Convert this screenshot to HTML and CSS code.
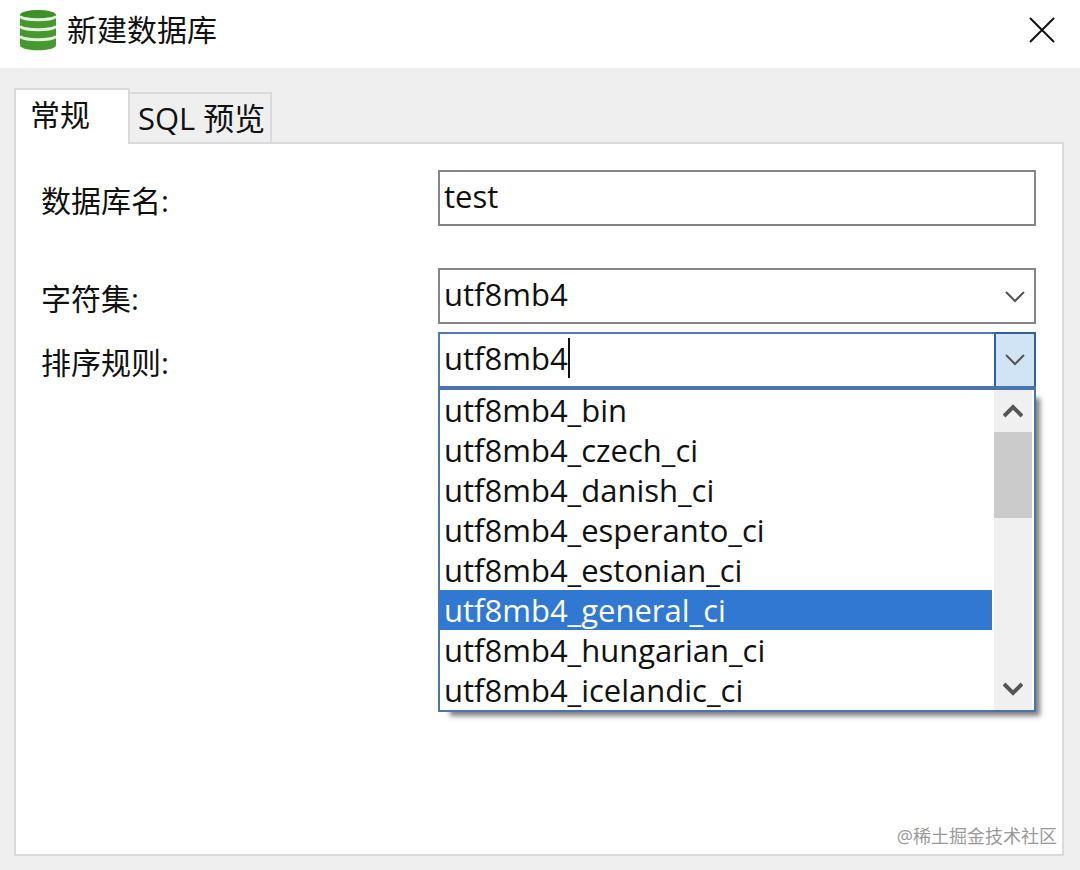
FILE: index.html
```html
<!DOCTYPE html>
<html lang="zh-CN">
<head>
    <meta charset="UTF-8">
    <meta name="viewport" content="width=device-width, initial-scale=1.0">
    <title>新建数据库</title>
    <link rel="stylesheet" href="styles.css">
</head>
<body>
    <div class="window">

        <!-- 标题栏 -->
        <header class="titlebar">
            <svg class="logo" viewBox="0 0 36 42" aria-hidden="true">
                <path d="M0 5v31c0 7 36 7 36 0V5z" fill="#46982f"/>
                <path d="M0 0h36v6H0z" fill="#fff"/>
                <ellipse cx="18" cy="6" rx="18" ry="5" fill="#3d9026"/>
                <path d="M0 7c2 5 34 5 36 0" class="logo-line"/>
                <path d="M0 17c2 5 34 5 36 0" class="logo-line"/>
                <path d="M0 27c2 5 34 5 36 0" class="logo-line"/>
            </svg>
            <h1>新建数据库</h1>
            <button type="button" class="close" aria-label="关闭">
                <svg viewBox="0 0 26 26"><path d="M1 1l24 24M25 1L1 25"/></svg>
            </button>
        </header>

        <main class="content">
            <!-- 选项卡 -->
            <div class="tabs" role="tablist">
                <button type="button" class="tab active" role="tab" aria-selected="true">常规</button>
                <button type="button" class="tab" role="tab" aria-selected="false">SQL 预览</button>
            </div>

            <form class="panel">
                <div class="row row-name">
                    <label for="name">数据库名:</label>
                    <input type="text" id="name" class="field" value="test">
                </div>

                <div class="row">
                    <label for="charset">字符集:</label>
                    <div class="select-wrap">
                        <select id="charset" class="field">
                            <option>utf8mb4</option>
                        </select>
                        <svg class="arrow" viewBox="0 0 20 12"><path d="M1 1l9 9 9-9"/></svg>
                    </div>
                </div>

                <div class="row">
                    <label for="collation">排序规则:</label>
                    <div class="combo">
                        <input type="text" id="collation" class="field" value="utf8mb4" role="combobox" aria-expanded="true" aria-controls="collations">
                        <span class="caret"></span>
                        <button type="button" class="combo-button" aria-label="展开">
                            <svg class="arrow" viewBox="0 0 20 12"><path d="M1 1l9 9 9-9"/></svg>
                        </button>

                        <!-- 下拉列表 -->
                        <div class="dropdown">
                            <ul id="collations" role="listbox">
                                <li role="option">utf8mb4_bin</li>
                                <li role="option">utf8mb4_czech_ci</li>
                                <li role="option">utf8mb4_danish_ci</li>
                                <li role="option">utf8mb4_esperanto_ci</li>
                                <li role="option">utf8mb4_estonian_ci</li>
                                <li role="option" class="selected" aria-selected="true">utf8mb4_general_ci</li>
                                <li role="option">utf8mb4_hungarian_ci</li>
                                <li role="option">utf8mb4_icelandic_ci</li>
                            </ul>
                            <div class="scrollbar">
                                <button type="button" aria-label="向上">
                                    <svg viewBox="0 0 20 16"><path d="M1 13l9-9 9 9"/></svg>
                                </button>
                                <div class="thumb"></div>
                                <button type="button" aria-label="向下">
                                    <svg viewBox="0 0 20 16"><path d="M1 3l9 9 9-9"/></svg>
                                </button>
                            </div>
                        </div>
                    </div>
                </div>

                <span class="watermark">@稀土掘金技术社区</span>
            </form>
        </main>
    </div>
</body>
</html>
```
FILE: styles.css
```css
* {
    box-sizing: border-box;
}

body {
    margin: 0;
    background: #efefef;
    color: #111;
    font-family: "Open Sans", "Noto Sans CJK SC", sans-serif;
    font-size: 30px;
}

button, input, select {
    font: inherit;
    color: inherit;
}

svg {
    display: block;
    fill: none;
}

.window {
    display: flex;
    flex-direction: column;
    min-height: 100vh;
}

/* 标题栏 */
.titlebar {
    display: flex;
    align-items: center;
    height: 68px;
    padding: 0 25px 8px 20px;
    background: #fff;
}

.logo {
    width: 36px;
    height: 42px;
}

.logo-line {
    stroke: #e4f3df;
    stroke-width: 3;
}

h1 {
    flex: 1;
    margin: 0 0 0 11px;
    font-size: 30px;
    font-weight: 400;
    line-height: 42px;
}

.close {
    padding: 0;
    border: none;
    background: none;
}

.close svg {
    width: 26px;
    height: 26px;
    stroke: #111;
    stroke-width: 2;
}

.content {
    display: flex;
    flex: 1;
    flex-direction: column;
    padding: 20px 16px 14px 14px;
}

/* 选项卡 */
.tabs {
    display: flex;
    align-items: flex-end;
    height: 56px;
    margin-bottom: -2px;
    z-index: 1;
}

.tab {
    height: 52px;
    padding: 0 5px 0 8px;
    border: 2px solid #dadada;
    border-left: none;
    background: #efefef;
    font-size: 31px;
    line-height: 48px;
}

.tab.active {
    height: 56px;
    padding: 0 38px 4px 14px;
    border-left: 2px solid #dadada;
    border-bottom: none;
    background: #fff;
    font-size: 30px;
}

.panel {
    position: relative;
    flex: 1;
    padding: 26px 26px 20px 24px;
    border: 2px solid #dadada;
    background: #fff;
}

.row {
    display: grid;
    grid-template-columns: 398px 1fr;
    margin-bottom: 8px;
}

.row-name {
    margin-bottom: 42px;
}

label {
    padding: 6px 0 0 1px;
    line-height: 50px;
}

.field {
    display: block;
    width: 100%;
    height: 56px;
    padding: 0 4px 4px;
    border: 2px solid #858585;
    border-radius: 0;
    outline: none;
    background: #fff;
    font-size: 31px;
    appearance: none;
}

.select-wrap, .combo {
    position: relative;
}

.arrow {
    width: 20px;
    height: 12px;
    stroke: #555;
    stroke-width: 2;
}

.select-wrap .arrow {
    position: absolute;
    top: 23px;
    right: 11px;
    pointer-events: none;
}

.combo .field {
    border-color: #4f79b3;
}

.caret {
    position: absolute;
    top: 6px;
    left: 130px;
    width: 2px;
    height: 40px;
    background: #111;
}

.combo-button {
    position: absolute;
    top: 0;
    right: 0;
    width: 42px;
    height: 56px;
    padding: 0 9px;
    border: 2px solid #315f9b;
    background: #d0e4f6;
}

/* 下拉列表 */
.dropdown {
    position: absolute;
    top: 54px;
    left: 0;
    right: 0;
    display: flex;
    padding-right: 2px;
    border: 2px solid #4a74ae;
    border-top-width: 4px;
    background: #fff;
    font-size: 31px;
    box-shadow: 8px 8px 5px -4px rgba(0, 0, 0, 0.5);
}

ul {
    flex: 1;
    margin: 0 2px 0 0;
    padding: 0;
    list-style: none;
}

li {
    height: 40px;
    padding-left: 4px;
    line-height: 41px;
}

li.selected {
    background: #3078d2;
    color: #fff;
}

.scrollbar {
    display: flex;
    flex-direction: column;
    width: 38px;
    background: #f0f0f0;
}

.scrollbar button {
    height: 42px;
    padding: 0 9px;
    border: none;
    background: none;
}

.scrollbar button:last-child {
    margin-top: auto;
}

.scrollbar svg {
    width: 20px;
    height: 16px;
    stroke: #555;
    stroke-width: 4;
}

.thumb {
    height: 86px;
    background: #cbcbcb;
}

.watermark {
    position: absolute;
    right: 5px;
    bottom: 5px;
    color: #999;
    font-size: 18px;
    line-height: 26px;
}
```
